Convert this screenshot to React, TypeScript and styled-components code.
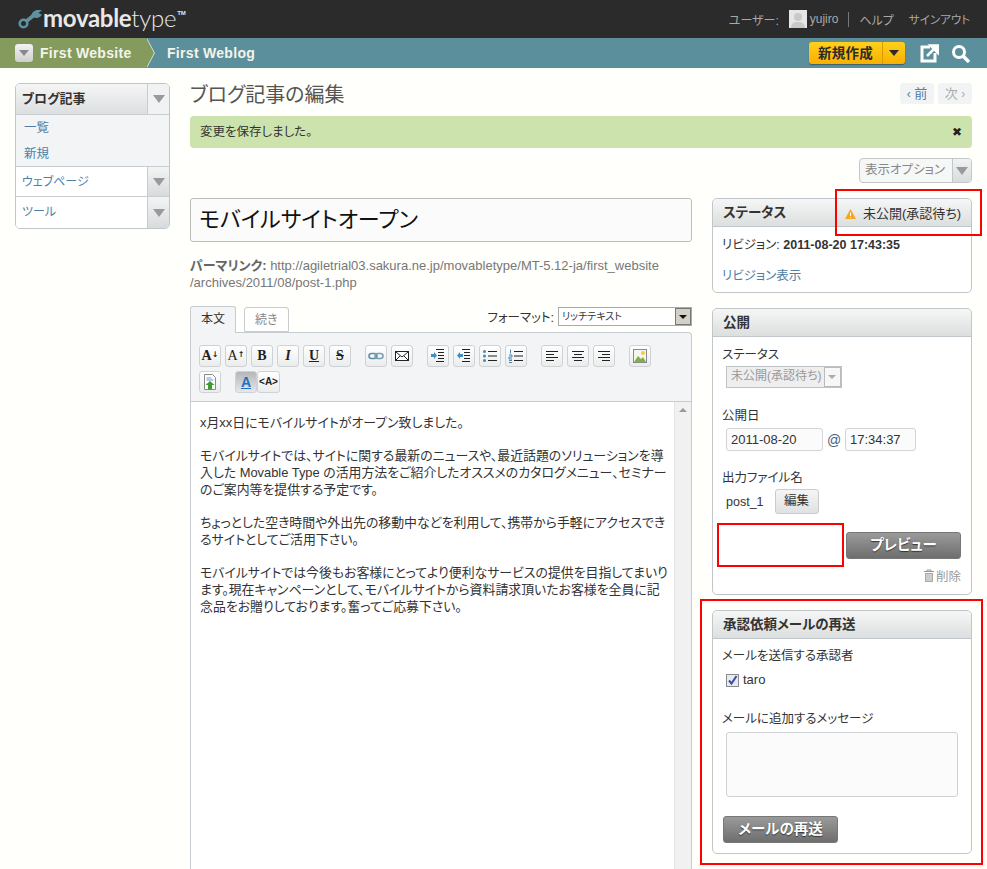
import React from "react";
import styled, { createGlobalStyle } from "styled-components";

const GlobalStyle = createGlobalStyle`
  html, body {
    margin: 0;
    padding: 0;
    background: #fffffb;
  }
  body {
    font-family: "Liberation Sans", "Noto Sans CJK JP", sans-serif;
    font-size: 12px;
    color: #333;
    font-feature-settings: "palt";
  }
`;

type Tool = { key: string; node: React.ReactNode; active?: boolean };

const Line = ({ d, color = "#222", w = 1 }: { d: string; color?: string; w?: number }) => (
  <path d={d} stroke={color} strokeWidth={w} fill="none" />
);

const Ico = ({ children }: { children: React.ReactNode }) => (
  <svg width="16" height="16" viewBox="0 0 16 16">{children}</svg>
);

const alignLeft = "M2 3.5h12M2 6.5h8M2 9.5h12M2 12.5h8";
const alignCenter = "M2 3.5h12M4 6.5h8M2 9.5h12M4 12.5h8";
const alignRight = "M2 3.5h12M6 6.5h8M2 9.5h12M6 12.5h8";

const toolGroups: Tool[][] = [
  [
    { key: "smaller", node: <Glyph>A<Sup>↓</Sup></Glyph> },
    { key: "bigger", node: <Glyph $light>A<Sup>↑</Sup></Glyph> },
    { key: "bold", node: <Glyph>B</Glyph> },
    { key: "italic", node: <Glyph $italic>I</Glyph> },
    { key: "underline", node: <Glyph $underline>U</Glyph> },
    { key: "strike", node: <Glyph $strike>S</Glyph> },
  ],
  [
    {
      key: "link",
      node: (
        <Ico>
          <rect x="1" y="5.5" width="8" height="5" rx="2.5" fill="none" stroke="#5f8fa8" strokeWidth="1.6" />
          <rect x="7" y="5.5" width="8" height="5" rx="2.5" fill="none" stroke="#7d9fb3" strokeWidth="1.6" />
        </Ico>
      ),
    },
    {
      key: "mail",
      node: (
        <Ico>
          <rect x="1.5" y="3.5" width="13" height="9" fill="#fff" stroke="#222" />
          <Line d="M2 4l6 5 6-5M2 12l4-4M14 12l-4-4" />
        </Ico>
      ),
    },
  ],
  [
    {
      key: "indent",
      node: (
        <Ico>
          <Line d="M6 1.5h8M8 4.5h6M8 7.5h6M8 10.5h6M6 13.5h8" />
          <path d="M1 6h3V4l3 3.5L4 11V9H1z" fill="#3d8fc4" />
        </Ico>
      ),
    },
    {
      key: "outdent",
      node: (
        <Ico>
          <Line d="M6 1.5h8M8 4.5h6M8 7.5h6M8 10.5h6M6 13.5h8" />
          <path d="M7 6H4V4L1 7.5 4 11V9h3z" fill="#3d8fc4" />
        </Ico>
      ),
    },
    {
      key: "ul",
      node: (
        <Ico>
          <Line d="M6 3.5h9M6 8h9M6 12.5h9" />
          <circle cx="2.5" cy="3.5" r="1.5" fill="#4b86b5" />
          <circle cx="2.5" cy="8" r="1.5" fill="#4b86b5" />
          <circle cx="2.5" cy="12.5" r="1.5" fill="#4b86b5" />
        </Ico>
      ),
    },
    {
      key: "ol",
      node: (
        <Ico>
          <Line d="M6 3.5h9M6 8h9M6 12.5h9" />
          <Line d="M2.5 1.5v4M1 7h3v2H1v2h3M1 12.5h3M1 14.5h3" color="#4b86b5" />
        </Ico>
      ),
    },
  ],
  [
    { key: "left", node: <Ico><Line d={alignLeft} /></Ico> },
    { key: "center", node: <Ico><Line d={alignCenter} /></Ico> },
    { key: "right", node: <Ico><Line d={alignRight} /></Ico> },
  ],
  [
    {
      key: "image",
      node: (
        <Ico>
          <rect x="1.5" y="1.5" width="13" height="13" fill="#f6f6ee" stroke="#8a8a8a" />
          <circle cx="11" cy="5" r="2" fill="#f0d040" />
          <path d="M2 14l4-6 3 3 2-2 3 5z" fill="#7fb04a" />
        </Ico>
      ),
    },
  ],
  [
    {
      key: "upload",
      node: (
        <Ico>
          <path d="M2.5.5h8l3 3v12h-11z" fill="#fff" stroke="#8a8a8a" />
          <Line d="M4.5 4h5M4.5 6h7" color="#6a9bd0" />
          <path d="M8 7l4.5 4H10v4.5H6V11H3.500z" fill="#3f9e2f" />
        </Ico>
      ),
    },
  ],
];

const panelFields = [
  { label: "メールを送信する承認者" },
  { label: "メールに追加するメッセージ" },
];

export default function App() {
  return (
    <Page>
      <GlobalStyle />
      <TopBar>
        <Logo>
          <svg width="24" height="19" viewBox="0 0 24 19">
            <circle cx="5.5" cy="13.500" r="3.800" fill="none" stroke="#5f929f" strokeWidth="2.600" />
            <path d="M8 11.500l7.500-6" stroke="#5f929f" strokeWidth="3.600" />
            <path d="M13.500 6C13.500 2.500 16.500 0 20 0h4l-3.500 3 3.500 1.800C22.500 7.500 19 8.500 16 7.500z" fill="#5f929f" />
          </svg>
          <LogoText>
            <b>movable</b>type
          </LogoText>
          <LogoMark>TM</LogoMark>
        </Logo>
        <UserNav>
          <span>ユーザー:</span>
          <UserName>
            <Avatar>
              <svg width="18" height="18" viewBox="0 0 18 18">
                <rect width="18" height="18" fill="#e6e6e6" />
                <circle cx="9" cy="7" r="4" fill="#c9c9c9" />
                <path d="M2 18c0-5 3-6 7-6s7 1 7 6z" fill="#c9c9c9" />
              </svg>
            </Avatar>
            yujiro
          </UserName>
          <NavDivider />
          <span>ヘルプ</span>
          <SignOut>サインアウト</SignOut>
        </UserNav>
      </TopBar>

      <SiteBar>
        <WebsiteCrumb>
          <CrumbToggle>
            <Caret />
          </CrumbToggle>
          First Website
        </WebsiteCrumb>
        <BlogCrumb>First Weblog</BlogCrumb>
        <SiteActions>
          <CreateButton>
            <CreateLabel>新規作成</CreateLabel>
            <CreateArrow />
          </CreateButton>
          <SiteIcon>
            <svg width="19" height="19" viewBox="0 0 19 19">
              <path d="M10 3H2v14h13V9" fill="none" stroke="#fff" strokeWidth="3" />
              <path d="M7 12l9-9M10.500 1.500H18V9z" stroke="#fff" strokeWidth="2.500" fill="#fff" />
            </svg>
          </SiteIcon>
          <SiteIcon>
            <svg width="19" height="19" viewBox="0 0 19 19">
              <circle cx="8" cy="8" r="5.500" fill="none" stroke="#fff" strokeWidth="3" />
              <path d="M12 12l6 6" stroke="#fff" strokeWidth="3.500" />
            </svg>
          </SiteIcon>
        </SiteActions>
      </SiteBar>

      <Body>
        <Sidebar>
          <SideRow $head>
            <SideLabel $head>ブログ記事</SideLabel>
            <SideArrow $head>
              <GreyCaret />
            </SideArrow>
          </SideRow>
          <SubMenu>
            <SubLink>一覧</SubLink>
            <SubLink>新規</SubLink>
          </SubMenu>
          <SideRow>
            <SideLabel>ウェブページ</SideLabel>
            <SideArrow>
              <GreyCaret />
            </SideArrow>
          </SideRow>
          <SideRow>
            <SideLabel>ツール</SideLabel>
            <SideArrow>
              <GreyCaret />
            </SideArrow>
          </SideRow>
        </Sidebar>

        <Main>
          <TitleRow>
            <PageTitle>ブログ記事の編集</PageTitle>
            <Pager>
              <PagerItem>
                <small>‹</small> 前
              </PagerItem>
              <PagerItem $disabled>
                次 <small>›</small>
              </PagerItem>
            </Pager>
          </TitleRow>

          <Message>
            変更を保存しました。
            <Close>✖</Close>
          </Message>

          <OptionsRow>
            <OptionsButton>
              <OptionsLabel>表示オプション</OptionsLabel>
              <OptionsArrow>
                <GreyCaret />
              </OptionsArrow>
            </OptionsButton>
          </OptionsRow>

          <Columns>
            <EntryColumn>
              <TitleInput>モバイルサイトオープン</TitleInput>
              <Permalink>
                <b>パーマリンク:</b> http://agiletrial03.sakura.ne.jp/movabletype/MT-5.12-ja/first_website
                <br />
                /archives/2011/08/post-1.php
              </Permalink>

              <TabRow>
                <Tab $active>本文</Tab>
                <Tab>続き</Tab>
                <FormatBox>
                  <span>フォーマット:</span>
                  <FormatSelect>
                    リッチテキスト
                    <FormatArrow />
                  </FormatSelect>
                </FormatBox>
              </TabRow>

              <Editor>
                <Toolbar>
                  {toolGroups.map((group, i) => (
                    <ToolGroup key={i}>
                      {group.map((t) => (
                        <ToolButton key={t.key}>{t.node}</ToolButton>
                      ))}
                    </ToolGroup>
                  ))}
                  <ToolGroup>
                    <ModeButton $active>
                      <Glyph $underline $blue>A</Glyph>
                    </ModeButton>
                    <ModeButton>
                      <Glyph $small>&lt;A&gt;</Glyph>
                    </ModeButton>
                  </ToolGroup>
                </Toolbar>
                <EditArea>
                  <EditText>
                    <p>x月xx日にモバイルサイトがオープン致しました。</p>
                    <p>
                      モバイルサイトでは、サイトに関する最新のニュースや、最近話題のソリューションを導
                      <br />
                      入した Movable Type の活用方法をご紹介したオススメのカタログメニュー、セミナー
                      <br />
                      のご案内等を提供する予定です。
                    </p>
                    <p>
                      ちょっとした空き時間や外出先の移動中などを利用して、携帯から手軽にアクセスでき
                      <br />
                      るサイトとしてご活用下さい。
                    </p>
                    <p>
                      モバイルサイトでは今後もお客様にとってより便利なサービスの提供を目指してまいり
                      <br />
                      ます。現在キャンペーンとして、モバイルサイトから資料請求頂いたお客様を全員に記
                      <br />
                      念品をお贈りしております。奮ってご応募下さい。
                    </p>
                  </EditText>
                  <Scrollbar>
                    <ScrollUp />
                  </Scrollbar>
                </EditArea>
              </Editor>
            </EntryColumn>

            <SideColumn>
              <Widget>
                <WidgetHead>
                  ステータス
                  <StateBadge>
                    <svg width="11" height="10" viewBox="0 0 11 10">
                      <path d="M5.500 0L11 10H0z" fill="#f5a623" />
                      <path d="M5.500 3.500v3.500M5.500 8v1" stroke="#fff" />
                    </svg>
                    未公開(承認待ち)
                  </StateBadge>
                </WidgetHead>
                <StatusBody>
                  <RevisionLine>
                    リビジョン: <b>2011-08-20 17:43:35</b>
                  </RevisionLine>
                  <RevisionLink>リビジョン表示</RevisionLink>
                </StatusBody>
                <Callout $kind="status" />
              </Widget>

              <Widget>
                <WidgetHead>公開</WidgetHead>
                <PublishBody>
                  <FieldLabel>ステータス</FieldLabel>
                  <StatusSelect>
                    未公開(承認待ち)
                    <StatusSelectArrow />
                  </StatusSelect>
                  <FieldLabel $top={20}>公開日</FieldLabel>
                  <DateRow>
                    <TextBox $w={97}>2011-08-20</TextBox>
                    <At>@</At>
                    <TextBox $w={71}>17:34:37</TextBox>
                  </DateRow>
                  <FieldLabel $top={19}>出力ファイル名</FieldLabel>
                  <FileRow>
                    <span>post_1</span>
                    <EditButton>編集</EditButton>
                  </FileRow>
                  <ActionRow>
                    <DarkButton $w={115}>プレビュー</DarkButton>
                  </ActionRow>
                  <DeleteRow>
                    <svg width="12" height="13" viewBox="0 0 12 13">
                      <path d="M1 2.500h10M4 2.500V1h4v1.500" stroke="#999" fill="none" />
                      <path d="M2 4h8v9H2z" fill="#aaa" />
                      <path d="M4 5v7M6 5v7M8 5v7" stroke="#eee" />
                    </svg>
                    削除
                  </DeleteRow>
                </PublishBody>
                <Callout $kind="preview" />
              </Widget>

              <Widget>
                <WidgetHead>承認依頼メールの再送</WidgetHead>
                <ResendBody>
                  <FieldLabel>{panelFields[0].label}</FieldLabel>
                  <CheckRow>
                    <CheckBox>
                      <svg width="11" height="11" viewBox="0 0 11 11">
                        <path d="M2 5.500l2.500 3L9.500 1" stroke="#3b4fa0" strokeWidth="2" fill="none" />
                      </svg>
                    </CheckBox>
                    taro
                  </CheckRow>
                  <FieldLabel $top={24}>{panelFields[1].label}</FieldLabel>
                  <MessageBox />
                  <ResendAction>
                    <DarkButton $w={115}>メールの再送</DarkButton>
                  </ResendAction>
                </ResendBody>
                <Callout $kind="resend" />
              </Widget>
            </SideColumn>
          </Columns>
        </Main>
      </Body>
    </Page>
  );
}

function Glyph({
  children,
  ...rest
}: {
  children: React.ReactNode;
  $light?: boolean;
  $italic?: boolean;
  $underline?: boolean;
  $strike?: boolean;
  $blue?: boolean;
  $small?: boolean;
}) {
  return <GlyphText {...rest}>{children}</GlyphText>;
}

function Sup({ children }: { children: React.ReactNode }) {
  return <SupText>{children}</SupText>;
}

const Page = styled.div`
  position: relative;
  width: 987px;
  height: 869px;
  overflow: hidden;
  background: #fffffb;
`;

const TopBar = styled.header`
  height: 38px;
  background: #2b2b2b;
  display: flex;
  align-items: center;
  justify-content: space-between;
  padding: 0 17px 0 18px;
`;

const Logo = styled.div`
  display: flex;
  align-items: center;
  color: #e8e8e8;
`;

const LogoText = styled.span`
  font-family: "Lato", "Open Sans", sans-serif;
  font-size: 24px;
  line-height: 38px;
  font-weight: 300;
  letter-spacing: -0.3px;
  margin-left: 1px;
  margin-top: -3px;
  b {
    font-weight: 700;
  }
`;

const LogoMark = styled.span`
  font-size: 6px;
  font-weight: 700;
  align-self: flex-start;
  margin: 8px 0 0 1px;
`;

const UserNav = styled.nav`
  display: flex;
  align-items: center;
  color: #a9a9a9;
  font-size: 12px;
`;

const UserName = styled.span`
  display: flex;
  align-items: center;
  margin-left: 10px;
  gap: 3px;
`;

const Avatar = styled.span`
  display: block;
  width: 18px;
  height: 18px;
  line-height: 0;
`;

const NavDivider = styled.span`
  width: 1px;
  height: 15px;
  background: #777;
  margin: 0 10px;
`;

const SignOut = styled.span`
  margin-left: 15px;
  font-size: 11.500px;
`;

const SiteBar = styled.div`
  height: 30px;
  background: #5c8f9c;
  display: flex;
  align-items: center;
  color: #f4f4ea;
  font-size: 14px;
  font-weight: 700;
  letter-spacing: 0.3px;
`;

const WebsiteCrumb = styled.div`
  position: relative;
  width: 146px;
  height: 30px;
  box-sizing: border-box;
  padding-left: 15px;
  background: #859b5e;
  display: flex;
  align-items: center;
  gap: 7px;
  &::after {
    content: "";
    position: absolute;
    top: 0;
    left: 100%;
    border-style: solid;
    border-width: 15px 0 15px 8px;
    border-color: transparent transparent transparent #859b5e;
    filter: drop-shadow(1px 0 0 #d5dcc6);
  }
`;

const CrumbToggle = styled.span`
  width: 18px;
  height: 18px;
  border-radius: 3px;
  background: linear-gradient(#f2f2f2, #cfcfcf);
  display: flex;
  align-items: center;
  justify-content: center;
`;

const Caret = styled.span`
  border-style: solid;
  border-width: 6px 5px 0;
  border-color: #8a8a8a transparent transparent;
`;

const GreyCaret = styled(Caret)`
  border-width: 8px 6px 0;
  border-color: #9a9a9a transparent transparent;
`;

const BlogCrumb = styled.div`
  margin-left: 21px;
`;

const SiteActions = styled.div`
  margin-left: auto;
  display: flex;
  align-items: center;
  padding-right: 17px;
`;

const CreateButton = styled.div`
  display: flex;
  width: 96px;
  height: 22px;
  margin-right: 15px;
  border-radius: 3px;
  background: linear-gradient(#ffcf1c, #f9b000);
  box-shadow: 0 1px 1px rgba(0, 0, 0, 0.35);
`;

const CreateLabel = styled.span`
  width: 73px;
  border-right: 1px solid #d99a00;
  text-align: center;
  color: #2b2b2b;
  font-size: 13.500px;
  line-height: 23px;
`;

const CreateArrow = styled.span`
  margin: 8px 0 0 6px;
  border-style: solid;
  border-width: 6px 5px 0;
  border-color: #2b2b2b transparent transparent;
`;

const SiteIcon = styled.span`
  width: 19px;
  height: 19px;
  margin-left: 12px;
  line-height: 0;
  &:first-of-type {
    margin-left: 0;
  }
`;

const Body = styled.div`
  display: flex;
  align-items: flex-start;
  padding: 15px 15px 0;
  gap: 20px;
`;

const Sidebar = styled.aside`
  width: 155px;
  flex: none;
  box-sizing: border-box;
  border: 1px solid #bfc6cb;
  border-radius: 5px;
  overflow: hidden;
  background: #fff;
`;

const SideRow = styled.div<{ $head?: boolean }>`
  display: flex;
  height: ${({ $head }) => ($head ? "30px" : "29px")};
  border-bottom: 1px solid #c6ccd0;
  &:last-child {
    border-bottom: 0;
    height: 31px;
  }
`;

const SideLabel = styled.span<{ $head?: boolean }>`
  flex: 1;
  padding-left: 6px;
  line-height: 30px;
  font-size: ${({ $head }) => ($head ? "13px" : "12px")};
  font-weight: ${({ $head }) => ($head ? 700 : 400)};
  color: ${({ $head }) => ($head ? "#333" : "#4e7ea6")};
  background: ${({ $head }) => ($head ? "linear-gradient(#f5f5f5, #dcdfe0)" : "#fff")};
`;

const SideArrow = styled.span<{ $head?: boolean }>`
  width: 21px;
  display: flex;
  align-items: center;
  justify-content: center;
  border-left: 1px solid #c6ccd0;
  background: ${({ $head }) => ($head ? "#f1f2f3" : "linear-gradient(#f3f4f4, #d8dbdc)")};
`;

const SubMenu = styled.div`
  background: #f3f4f6;
  border-bottom: 1px solid #c6ccd0;
  padding-top: 1px;
`;

const SubLink = styled.div`
  height: 25px;
  line-height: 25px;
  padding-left: 8px;
  color: #4e7ea6;
  font-size: 12.500px;
  &:last-child {
    line-height: 27px;
  }
`;

const Main = styled.main`
  flex: 1;
  min-width: 0;
`;

const TitleRow = styled.div`
  display: flex;
  align-items: flex-start;
  justify-content: space-between;
  height: 33px;
`;

const PageTitle = styled.h1`
  margin: 1px 0 0;
  font-size: 20px;
  line-height: 22px;
  font-weight: 400;
  color: #555;
`;

const Pager = styled.div`
  display: flex;
  gap: 4px;
`;

const PagerItem = styled.span<{ $disabled?: boolean }>`
  width: 34px;
  height: 21px;
  line-height: 21px;
  text-align: center;
  border-radius: 3px;
  font-size: 13px;
  background: #f2f3f5;
  color: ${({ $disabled }) => ($disabled ? "#aaa" : "#4e7ea6")};
  small {
    font-size: 12px;
  }
`;

const Message = styled.div`
  position: relative;
  height: 32px;
  line-height: 33px;
  padding: 0 10px;
  border-radius: 4px;
  background: #cde3ae;
  font-size: 12.500px;
  color: #333;
`;

const Close = styled.span`
  position: absolute;
  right: 10px;
  top: 0;
  font-size: 12px;
  color: #222;
`;

const OptionsRow = styled.div`
  display: flex;
  justify-content: flex-end;
  margin: 10px 0 15px;
`;

const OptionsButton = styled.div`
  display: flex;
  width: 113px;
  height: 25px;
  box-sizing: border-box;
  border: 1px solid #c2c6c8;
  border-radius: 4px;
  overflow: hidden;
  background: #f6f7f7;
`;

const OptionsLabel = styled.span`
  flex: 1;
  line-height: 23px;
  padding-left: 5px;
  color: #888;
  font-size: 12.500px;
`;

const OptionsArrow = styled.span`
  width: 18px;
  display: flex;
  align-items: center;
  justify-content: center;
  border-left: 1px solid #c2c6c8;
  background: linear-gradient(#f1f2f2, #d9dcdd);
`;

const Columns = styled.div`
  display: flex;
  align-items: flex-start;
  gap: 20px;
`;

const EntryColumn = styled.div`
  width: 502px;
  flex: none;
`;

const TitleInput = styled.div`
  height: 44px;
  box-sizing: border-box;
  border: 1px solid #bdbdbd;
  border-radius: 3px;
  background: #fbfbfb;
  padding-left: 8px;
  font-size: 22px;
  line-height: 42px;
  color: #111;
`;

const Permalink = styled.div`
  margin-top: 15px;
  height: 41px;
  font-size: 13px;
  line-height: 17px;
  color: #777;
  white-space: nowrap;
  b {
    color: #666;
  }
`;

const TabRow = styled.div`
  position: relative;
  z-index: 1;
  display: flex;
  align-items: flex-start;
  gap: 8px;
  height: 27px;
  margin-top: 8px;
`;

const Tab = styled.div<{ $active?: boolean }>`
  height: ${({ $active }) => ($active ? "27px" : "25px")};
  box-sizing: border-box;
  padding: 0 10px;
  border: 1px solid #c6ccd0;
  border-bottom: ${({ $active }) => ($active ? "0" : "1px solid #c6ccd0")};
  border-radius: 3px 3px 0 0;
  background: ${({ $active }) => ($active ? "#f3f4f6" : "#fff")};
  color: ${({ $active }) => ($active ? "#333" : "#888")};
  font-size: 12px;
  line-height: 25px;
  margin-top: ${({ $active }) => ($active ? "0" : "1px")};
`;

const FormatBox = styled.div`
  margin-left: auto;
  display: flex;
  align-items: center;
  gap: 4px;
  font-size: 12.500px;
  color: #333;
  height: 20px;
`;

const FormatSelect = styled.div`
  position: relative;
  width: 134px;
  height: 19px;
  box-sizing: border-box;
  border: 1px solid #aaa;
  background: #fff;
  padding-left: 3px;
  font-size: 10px;
  line-height: 17px;
`;

const FormatArrow = styled.span`
  position: absolute;
  right: 0;
  top: 0;
  width: 16px;
  height: 17px;
  box-sizing: border-box;
  background: #d4d0c8;
  border: 1px solid #777;
  &::after {
    content: "";
    position: absolute;
    left: 3px;
    top: 6px;
    border-style: solid;
    border-width: 4px 4px 0;
    border-color: #111 transparent transparent;
  }
`;

const Editor = styled.div`
  margin-top: -1px;
  height: 540px;
  box-sizing: border-box;
  border: 1px solid #c6ccd0;
  border-bottom: 0;
  border-radius: 0 4px 0 0;
  background: #f3f4f6;
`;

const Toolbar = styled.div`
  height: 69px;
  box-sizing: border-box;
  padding: 12px 8px 0;
  display: flex;
  flex-wrap: wrap;
  align-content: flex-start;
  column-gap: 14px;
  row-gap: 4px;
  border-bottom: 1px solid #c6ccd0;
`;

const ToolGroup = styled.div`
  display: flex;
  gap: 4px;
`;

const ToolButton = styled.span`
  width: 22px;
  height: 22px;
  box-sizing: border-box;
  border: 1px solid #cfd2d4;
  border-radius: 3px;
  background: linear-gradient(#fff, #ebecec);
  display: flex;
  align-items: center;
  justify-content: center;
`;

const ModeButton = styled(ToolButton)<{ $active?: boolean }>`
  width: ${({ $active }) => ($active ? "22px" : "23px")};
  margin-left: ${({ $active }) => ($active ? "0" : "-4px")};
  background: ${({ $active }) => ($active ? "linear-gradient(#b4b6b8, #e6e7e7)" : "linear-gradient(#fff, #ebecec)")};
`;

const GlyphText = styled.span<{
  $light?: boolean;
  $italic?: boolean;
  $underline?: boolean;
  $strike?: boolean;
  $blue?: boolean;
  $small?: boolean;
}>`
  font-family: ${({ $blue, $small }) => ($blue || $small ? '"Liberation Sans", sans-serif' : '"Liberation Serif", serif')};
  font-size: ${({ $small }) => ($small ? "10px" : "14px")};
  font-weight: ${({ $light }) => ($light ? 400 : 700)};
  font-style: ${({ $italic }) => ($italic ? "italic" : "normal")};
  text-decoration: ${({ $underline, $strike }) => ($underline ? "underline" : $strike ? "line-through" : "none")};
  color: ${({ $blue }) => ($blue ? "#1f6fc4" : "#222")};
  line-height: 1;
  white-space: nowrap;
`;

const SupText = styled.span`
  font-family: "DejaVu Sans", sans-serif;
  font-size: 8px;
  font-weight: 700;
  vertical-align: 3px;
`;

const EditArea = styled.div`
  display: flex;
  height: 470px;
  background: #fff;
`;

const EditText = styled.div`
  flex: 1;
  padding: 12px 0 0 9px;
  font-size: 12.900px;
  line-height: 17px;
  color: #333;
  white-space: nowrap;
  p {
    margin: 0 0 16px;
  }
`;

const Scrollbar = styled.div`
  position: relative;
  width: 16px;
  background: #f1f1f1;
  border-left: 1px solid #e4e4e4;
`;

const ScrollUp = styled.span`
  position: absolute;
  top: 6px;
  left: 4px;
  border-style: solid;
  border-width: 0 4px 4px;
  border-color: transparent transparent #999;
`;

const SideColumn = styled.div`
  width: 260px;
  flex: none;
  display: flex;
  flex-direction: column;
  gap: 15px;
`;

const Widget = styled.section`
  position: relative;
  box-sizing: border-box;
  border: 1px solid #c0c6c9;
  border-radius: 5px;
  background: #fff;
`;

const WidgetHead = styled.h2`
  position: relative;
  margin: 0;
  height: 27px;
  padding-left: 10px;
  border-bottom: 1px solid #c0c6c9;
  border-radius: 5px 5px 0 0;
  background: linear-gradient(#f6f6f6, #dcdfdf);
  font-size: 13.500px;
  line-height: 27px;
  font-weight: 700;
  color: #333;
`;

const StateBadge = styled.span`
  position: absolute;
  right: 10px;
  top: 1px;
  display: flex;
  align-items: center;
  gap: 7px;
  font-size: 13px;
  font-weight: 400;
`;

const StatusBody = styled.div`
  height: 65px;
  padding: 10px 9px 0;
  box-sizing: border-box;
`;

const RevisionLine = styled.div`
  font-size: 12.500px;
  line-height: 17px;
`;

const RevisionLink = styled.div`
  margin-top: 14px;
  color: #4e7ea6;
  font-size: 12.500px;
  line-height: 17px;
`;

const PublishBody = styled.div`
  height: 257px;
  box-sizing: border-box;
  padding: 10px 10px 0 9px;
`;

const FieldLabel = styled.div<{ $top?: number }>`
  font-size: 12.500px;
  line-height: 17px;
  margin-top: ${({ $top }) => $top ?? 0}px;
`;

const StatusSelect = styled.div`
  position: relative;
  width: 116px;
  height: 22px;
  box-sizing: border-box;
  margin: 2px 0 0 4px;
  border: 1px solid #bcc2c6;
  background: #eeeeee;
  color: #999;
  font-size: 12px;
  line-height: 18px;
  padding-left: 4px;
`;

const StatusSelectArrow = styled.span`
  position: absolute;
  right: 0;
  top: 0;
  width: 17px;
  height: 20px;
  box-sizing: border-box;
  background: #f7f7f7;
  border: 1px solid #bbb;
  &::after {
    content: "";
    position: absolute;
    left: 3px;
    top: 7px;
    border-style: solid;
    border-width: 4px 4px 0;
    border-color: #aaa transparent transparent;
  }
`;

const DateRow = styled.div`
  display: flex;
  align-items: center;
  margin: 3px 0 0 4px;
`;

const TextBox = styled.div<{ $w: number }>`
  width: ${({ $w }) => $w}px;
  height: 23px;
  box-sizing: border-box;
  border: 1px solid #d2d4d6;
  border-radius: 3px;
  background: #fbfbfb;
  padding-left: 4px;
  font-size: 13px;
  line-height: 21px;
  color: #333;
`;

const At = styled.span`
  width: 22px;
  text-align: center;
  font-size: 14px;
  color: #3f5f80;
`;

const FileRow = styled.div`
  display: flex;
  align-items: center;
  gap: 11px;
  margin: 2px 0 0 4px;
  font-size: 12.500px;
`;

const EditButton = styled.span`
  width: 44px;
  height: 25px;
  box-sizing: border-box;
  border: 1px solid #c9cccd;
  border-radius: 3px;
  background: linear-gradient(#f5f5f5, #dfe1e2);
  text-align: center;
  line-height: 23px;
  font-size: 12.500px;
  color: #333;
`;

const ActionRow = styled.div`
  display: flex;
  justify-content: flex-end;
  margin-top: 18px;
`;

const DarkButton = styled.span<{ $w: number }>`
  display: block;
  width: ${({ $w }) => $w}px;
  height: 27px;
  box-sizing: border-box;
  border: 1px solid #777;
  border-radius: 3px;
  background: linear-gradient(#9a9a9a, #6e6e6e);
  color: #fff;
  text-align: center;
  font-size: 14.500px;
  font-weight: 700;
  line-height: 25px;
  text-shadow: 0 1px 1px #333;
`;

const DeleteRow = styled.div`
  display: flex;
  justify-content: flex-end;
  align-items: center;
  gap: 1px;
  margin-top: 7px;
  color: #999;
  font-size: 12.500px;
`;

const ResendBody = styled.div`
  height: 214px;
  box-sizing: border-box;
  padding: 9px 10px 0 9px;
`;

const CheckRow = styled.div`
  display: flex;
  align-items: center;
  gap: 4px;
  margin: 8px 0 0 4px;
  font-size: 13px;
  line-height: 14px;
`;

const CheckBox = styled.span`
  width: 13px;
  height: 13px;
  box-sizing: border-box;
  border: 1px solid #8a8a8a;
  background: #e8eaf2;
  line-height: 0;
`;

const MessageBox = styled.div`
  width: 232px;
  height: 65px;
  box-sizing: border-box;
  margin: 4px 0 0 4px;
  border: 1px solid #cfd2d4;
  border-radius: 3px;
  background: #fbfbfb;
`;

const ResendAction = styled.div`
  margin-top: 19px;
  margin-left: 1px;
`;

const calloutBox = {
  status: "left: 122px; top: -10px; width: 147px; height: 47px;",
  preview: "left: 4px; top: 214px; width: 127px; height: 44px;",
  resend: "left: -13px; top: -12px; width: 283px; height: 266px;",
};

const Callout = styled.span<{ $kind: keyof typeof calloutBox }>`
  position: absolute;
  box-sizing: border-box;
  border: 2px solid #f00;
  pointer-events: none;
  ${({ $kind }) => calloutBox[$kind]}
`;
